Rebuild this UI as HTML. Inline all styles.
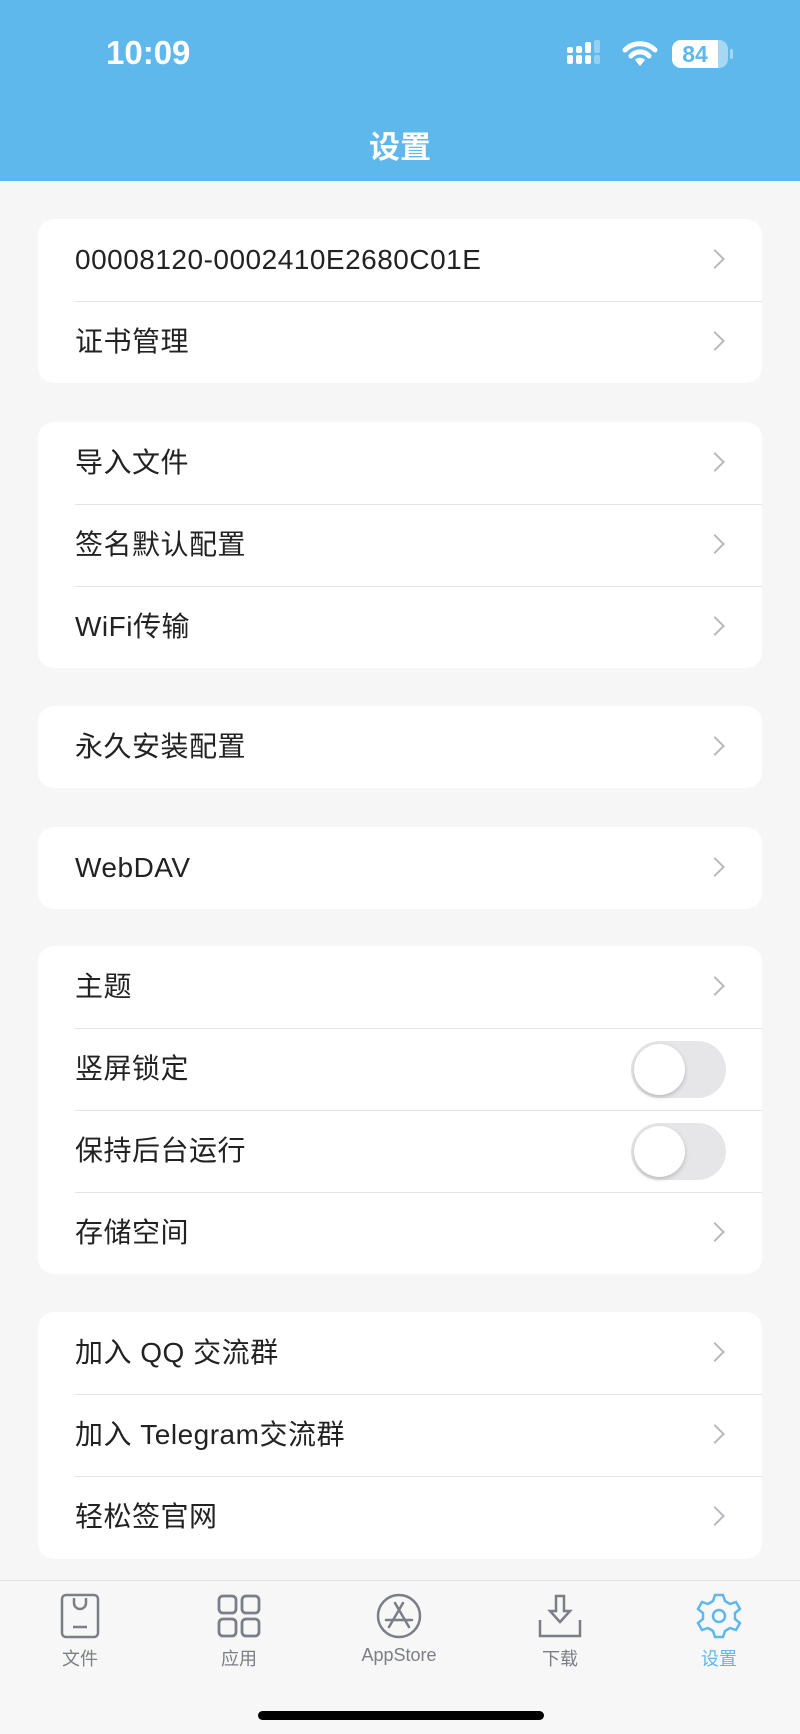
<!DOCTYPE html>
<html><head><meta charset="utf-8"><style>
*{margin:0;padding:0;box-sizing:border-box}
body{width:800px;height:1734px;background:#f6f6f6;font-family:"Liberation Sans","Noto Sans CJK SC",sans-serif;position:relative;overflow:hidden;color:#1c1c1e}
.hdr{position:absolute;left:0;top:0;width:800px;height:181px;background:#5eb8ec;color:#fff}
.time{position:absolute;left:106px;top:34px;font-size:33px;font-weight:bold}
.title{position:absolute;left:0;width:800px;top:122px;text-align:center;font-size:31px;font-weight:bold}
.card{position:absolute;left:38px;width:724px;background:#fff;border-radius:16px;overflow:hidden}
.row{position:relative;height:82px;font-size:28px;letter-spacing:0.5px;line-height:82px;padding-left:37px;color:#222}
.row+.row:before{content:"";position:absolute;left:37px;right:0;top:0;border-top:1px solid #e3e3e6}
.chev{position:absolute;left:670px;top:33px;width:14px;height:14px;border-right:2.5px solid #b8b8bd;border-top:2.5px solid #b8b8bd;transform:rotate(45deg)}
.tog{position:absolute;left:593px;top:13px;width:95px;height:57px;border-radius:29px;background:#e6e6e9}
.tog:after{content:"";position:absolute;left:3px;top:3px;width:51px;height:51px;border-radius:50%;background:#fff;box-shadow:0 2px 5px rgba(0,0,0,.2)}
.tab{position:absolute;top:1580px;left:0;width:800px;height:154px;background:#f7f7f7;border-top:1px solid #e2e2e2}
.ti{position:absolute;top:12px;width:120px;margin-left:-60px;text-align:center;font-size:18px;color:#7b7e85}
.ti svg{display:block;margin:0 auto 6px}
.home{position:absolute;left:258px;top:1711px;width:286px;height:9px;border-radius:5px;background:#000}
</style></head><body>
<div class="hdr">
<div class="time">10:09</div>
<svg style="position:absolute;left:566px;top:40px" width="44" height="30"><g fill="#fff"><rect x="1" y="15" width="6" height="9" rx="2"/><rect x="10" y="15" width="6" height="9" rx="2"/><rect x="10" y="6" width="6" height="7" rx="2"/><rect x="19" y="15" width="6" height="9" rx="2"/><rect x="19" y="2" width="6" height="11" rx="2"/><rect x="1" y="7" width="6" height="6" rx="2"/></g><g fill="#fff" opacity=".35"><rect x="28" y="15" width="6" height="9" rx="2"/><rect x="28" y="0" width="6" height="13" rx="2"/></g></svg>
<svg style="position:absolute;left:622px;top:40px" width="36" height="26" viewBox="0 0 36 26"><path d="M3 10a21 21 0 0 1 30 0" stroke="#fff" stroke-width="5" fill="none" stroke-linecap="round"/><path d="M9 16a12 12 0 0 1 18 0" stroke="#fff" stroke-width="5" fill="none" stroke-linecap="round"/><path d="M13 20l5 6 5-6a7 7 0 0 0-10 0z" fill="#fff"/></svg>
<div style="position:absolute;left:672px;top:40px;width:56px;height:28px;border-radius:9px;background:rgba(255,255,255,.45)"></div>
<div style="position:absolute;left:672px;top:40px;width:46px;height:28px;border-radius:9px 0 0 9px;background:#fff;color:#5eb8ec;font-weight:bold;font-size:23px;line-height:28px;text-align:center">84</div>
<div style="position:absolute;left:730px;top:49px;width:3px;height:10px;border-radius:2px;background:rgba(255,255,255,.45)"></div>
<div class="title">设置</div>
</div>

<div class="card" style="top:219px;height:164px"><div class="row">00008120-0002410E2680C01E<i class="chev"></i></div><div class="row">证书管理<i class="chev"></i></div></div>
<div class="card" style="top:422px;height:246px"><div class="row">导入文件<i class="chev"></i></div><div class="row">签名默认配置<i class="chev"></i></div><div class="row">WiFi传输<i class="chev"></i></div></div>
<div class="card" style="top:706px;height:82px"><div class="row">永久安装配置<i class="chev"></i></div></div>
<div class="card" style="top:827px;height:82px"><div class="row">WebDAV<i class="chev"></i></div></div>
<div class="card" style="top:946px;height:328px"><div class="row">主题<i class="chev"></i></div><div class="row">竖屏锁定<i class="tog"></i></div><div class="row">保持后台运行<i class="tog"></i></div><div class="row">存储空间<i class="chev"></i></div></div>
<div class="card" style="top:1312px;height:247px"><div class="row">加入 QQ 交流群<i class="chev"></i></div><div class="row">加入 Telegram交流群<i class="chev"></i></div><div class="row">轻松签官网<i class="chev"></i></div></div>

<div class="tab">
<div class="ti" style="left:80px"><svg width="44" height="46" viewBox="0 0 44 46" fill="none" stroke="#7b7e85" stroke-width="2.5"><rect x="4" y="2" width="36" height="42" rx="4"/><path d="M16 5v5a6 6 0 0 0 12 0V5"/><path d="M15 34h14"/></svg>文件</div>
<div class="ti" style="left:239px"><svg width="46" height="46" viewBox="0 0 46 46" fill="none" stroke="#7b7e85" stroke-width="2.8"><rect x="3" y="3" width="17" height="17" rx="4"/><rect x="26" y="3" width="17" height="17" rx="4"/><rect x="3" y="26" width="17" height="17" rx="4"/><rect x="26" y="26" width="17" height="17" rx="4"/></svg>应用</div>
<div class="ti" style="left:399px"><svg width="46" height="46" viewBox="0 0 46 46" fill="none" stroke="#7b7e85" stroke-width="2.5"><circle cx="23" cy="23" r="21"/><path d="M19 10l14 24M27 10L13 34M10 27h26" stroke-linecap="round"/></svg>AppStore</div>
<div class="ti" style="left:560px"><svg width="46" height="46" viewBox="0 0 46 46" fill="none" stroke="#7b7e85" stroke-width="2.5"><path d="M19 3h8v15h6l-10 11-10-11h6z"/><path d="M3 27v16h40V27"/></svg>下载</div>
<div class="ti" style="left:719px;color:#5eb8ec"><svg width="46" height="46" viewBox="0 0 46 46" fill="none" stroke="#5eb8ec" stroke-width="2.5"><path d="M19 2h8l2 6 5 3 6-2 4 7-5 4v6l5 4-4 7-6-2-5 3-2 6h-8l-2-6-5-3-6 2-4-7 5-4v-6l-5-4 4-7 6 2 5-3z"/><circle cx="23" cy="23" r="6"/></svg>设置</div>
</div>
<div class="home"></div>
</body></html>
